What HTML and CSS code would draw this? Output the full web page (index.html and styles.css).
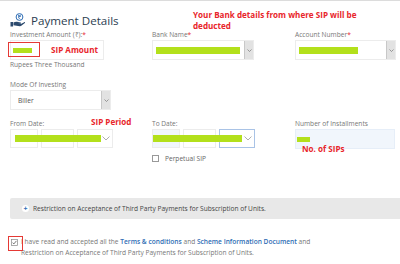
FILE: index.html
```html
<!DOCTYPE html>
<html>
<head>
<meta charset="utf-8">
<link rel="stylesheet" href="styles.css">
</head>
<body>
<div class="page">
  <header class="head">
    <div class="title">
      <svg class="ico" width="16" height="14" viewBox="0 0 16 14">
        <circle cx="9.5" cy="4" r="3.4" fill="none" stroke="#2e6db4" stroke-width="1"/>
        <path d="M8 2.4h3M8 3.5h3M8.3 2.4c1.6 0 1.6 2.2 0 2.2l2 1.6" fill="none" stroke="#2e6db4" stroke-width="0.7"/>
        <rect x="0.5" y="9" width="2.6" height="4.5" fill="#2c4a6e"/>
        <path d="M3.5 9.4c1.5-0.8 3-1 4.5-0.4l2.6 0.6c0.7 0.2 0.6 1-0.1 1.1l-2.8-0.1 3.2 0.4 3.300-1.8c0.6-0.3 1.1 0.3 0.7 0.8l-3.6 2.8c-0.5 0.4-1 0.5-1.6 0.4l-6.2-1z" fill="#2c4a6e"/>
      </svg>
      <span>Payment Details</span>
    </div>
    <p class="note">Your Bank details from where SIP will be<br>deducted</p>
  </header>

  <section class="grid">
    <div class="field">
      <div class="label">Investment Amount (₹):<span class="req">*</span></div>
      <div class="box w94 plain">
        <span class="bar amt"></span>
        <span class="mark amt-mark"></span>
        <span class="anno anno-amt">SIP Amount</span>
      </div>
      <div class="hint">Rupees Three Thousand</div>
    </div>
    <div class="field">
      <div class="label">Bank Name<span class="req">*</span></div>
      <div class="box w102 select">
        <span class="val"><span class="bar bank"></span></span>
        <span class="btn"><svg width="5" height="3" viewBox="0 0 5 3"><path d="M0.5 0.5l2 2 2-2" fill="none" stroke="#777" stroke-width="0.7"/></svg></span>
      </div>
    </div>
    <div class="field">
      <div class="label">Account Number<span class="req">*</span></div>
      <div class="box w101 select">
        <span class="val"><span class="bar acct"></span></span>
        <span class="btn"><svg width="5" height="3" viewBox="0 0 5 3"><path d="M0.5 0.5l2 2 2-2" fill="none" stroke="#777" stroke-width="0.7"/></svg></span>
      </div>
    </div>
  </section>

  <section class="grid row2">
    <div class="field">
      <div class="label">Mode Of Investing</div>
      <div class="box w101 select">
        <span class="val text">Biller</span>
        <span class="btn"><svg width="5" height="3" viewBox="0 0 5 3"><path d="M0.5 0.5l2 2 2-2" fill="none" stroke="#777" stroke-width="0.7"/></svg></span>
      </div>
    </div>
  </section>

  <section class="grid row3">
    <div class="field">
      <div class="label">From Date:</div>
      <div class="dates">
        <span class="d d1"></span><span class="d d2"></span><span class="d d3"><svg class="chev" width="8" height="5" viewBox="0 0 8 5"><path d="M0.5 0.5l3.5 3.5 3.5-3.5" fill="none" stroke="#999" stroke-width="0.8"/></svg></span>
        <span class="bar from"></span>
      </div>
      <span class="anno anno-period">SIP Period</span>
    </div>
    <div class="field">
      <div class="label">To Date:</div>
      <div class="dates">
        <span class="d d1 soft"></span><span class="d d2"></span><span class="d d3 focus"><svg class="chev" width="8" height="5" viewBox="0 0 8 5"><path d="M0.5 0.5l3.5 3.5 3.5-3.5" fill="none" stroke="#999" stroke-width="0.8"/></svg></span>
        <span class="bar to"></span>
      </div>
      <label class="perp"><span class="cb"></span>Perpetual SIP</label>
    </div>
    <div class="field">
      <div class="label">Number of Installments</div>
      <div class="box w100 soft">
        <span class="bar inst"></span>
      </div>
      <span class="anno anno-inst">No. of SIPs</span>
    </div>
  </section>

  <div class="band">
    <span class="plus">+</span>
    <span>Restriction on Acceptance of Third Party Payments for Subscription of Units.</span>
  </div>

  <div class="agree">
    <span class="chk"><svg width="7" height="7" viewBox="0 0 7 7"><rect x="0.5" y="0.5" width="6" height="6" fill="#fff" stroke="#888" stroke-width="0.7"/><path d="M1.6 3.7l1.3 1.2 2.5-3" fill="none" stroke="#555" stroke-width="0.8"/></svg></span>
    <span class="mark chk-mark"></span>
    <p>I have read and accepted all the <b>Terms &amp; conditions</b> and <b>Scheme Information Document</b> and Restriction on Acceptance of Third Party Payments for Subscription of Units.</p>
  </div>
</div>
</body>
</html>
```

FILE: styles.css
```css
* { box-sizing: border-box; }
body {
  margin: 0;
  background: #fff;
  font-family: "Open Sans", "Liberation Sans", sans-serif;
  color: #666;
}
.page {
  width: 400px;
  height: 264px;
  overflow: hidden;
  border-top: 1px solid #dcdcdc;
}
.head {
  display: flex;
  padding: 8px 0 0 10px;
  height: 29px;
}
.title {
  display: flex;
  align-items: center;
  gap: 5px;
  width: 183px;
  height: 18px;
  margin-top: 2px;
  font-size: 11.6px;
  color: #2c3e50;
}
.ico { flex: none; }
.note {
  margin: 0;
  font-size: 8.1px;
  font-weight: 700;
  line-height: 11px;
  color: #e8262b;
}
.grid {
  display: grid;
  grid-template-columns: 142px 143px 105px;
  padding-left: 10px;
}
.field { position: relative; }
.label {
  font-size: 6.6px;
  line-height: 10px;
  height: 10px;
  color: #777;
}
.req { color: #e8262b; }
.hint {
  font-size: 6.6px;
  line-height: 10px;
  color: #777;
}
.box {
  position: relative;
  height: 20px;
  border: 1px solid #ececec;
  display: flex;
  align-items: center;
}
.w94 { width: 94px; }
.w100 { width: 100px; }
.w101 { width: 101px; }
.w102 { width: 102px; }
.select .val {
  flex: 1;
  display: flex;
  align-items: center;
  padding-left: 3px;
}
.select .val.text {
  padding-left: 7px;
  font-size: 6.6px;
  color: #555;
}
.select .btn {
  width: 9px;
  height: 100%;
  background: #e2e2e2;
  border-left: 1px solid #c8c8c8;
  display: flex;
  align-items: center;
  justify-content: center;
}
.soft { background: #f1f6fc; border-color: #e6eef8; }
.bar {
  display: block;
  height: 7px;
  background: #b3e01b;
}
.bar.amt { width: 19px; margin-left: 2px; height: 5px; }
.bar.bank { width: 84px; }
.bar.acct { width: 59px; }
.bar.inst { width: 13px; margin-left: 1px; height: 5px; }
.mark {
  position: absolute;
  border: 1.5px solid #e53935;
}
.amt-mark { left: -3px; top: 1px; width: 32px; height: 15px; }
.anno {
  position: absolute;
  font-size: 8.1px;
  font-weight: 700;
  color: #e8262b;
  white-space: nowrap;
}
.anno-amt { left: 40px; top: 3px; }
.anno-period { left: 81px; top: -3px; }
.anno-inst { left: 7px; top: 24px; }
.row2 { margin-top: 10px; }
.row3 { margin-top: 9px; }
.dates {
  position: relative;
  display: flex;
  gap: 3px;
  height: 19px;
}
.d {
  display: block;
  height: 19px;
  border: 1px solid #ececec;
}
.d1 { width: 28px; }
.d2 { width: 33px; }
.d3 { width: 36px; display: flex; align-items: center; justify-content: flex-end; padding-right: 2px; }
.d3.focus { border-color: #a9c3e6; }
.bar.from { position: absolute; left: 5px; top: 6px; width: 86px; }
.bar.to { position: absolute; left: 1px; top: 6px; width: 89px; }
.perp {
  display: flex;
  align-items: center;
  gap: 6px;
  margin-top: 6px;
  font-size: 6.6px;
  color: #666;
}
.cb {
  width: 7px;
  height: 7px;
  border: 1px solid #999;
  background: #fff;
}
.band {
  margin: 35px 0 0 10px;
  height: 21px;
  background: #e8e8e8;
  border-radius: 2px 0 0 2px;
  display: flex;
  align-items: center;
  padding-left: 12px;
  gap: 4px;
  font-size: 6.6px;
  color: #444;
}
.plus {
  width: 7px;
  height: 7px;
  border-radius: 50%;
  background: #fff;
  color: #2e6db4;
  font-size: 7px;
  font-weight: 700;
  line-height: 7px;
  text-align: center;
}
.agree {
  position: relative;
  margin-top: 17px;
  padding-left: 21px;
  padding-right: 88px;
}
.agree p {
  margin: 0;
  font-size: 6.6px;
  line-height: 11px;
  color: #777;
}
.agree b { font-weight: 600; color: #2e6db4; }
.chk { position: absolute; left: 11px; top: 3px; line-height: 0; }
.chk-mark { left: 8px; top: 0; width: 15px; height: 15px; }
```
